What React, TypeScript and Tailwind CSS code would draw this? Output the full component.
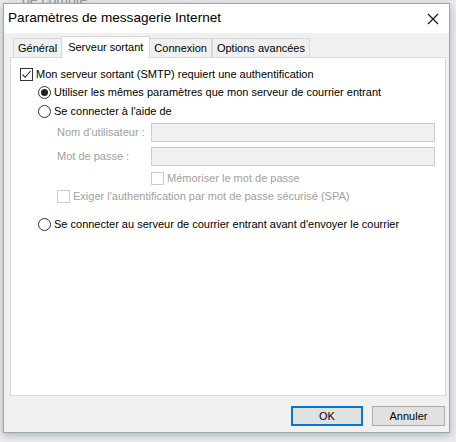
import React from "react";

const font = { fontFamily: '"Liberation Sans", Arial, sans-serif' };

function CheckBox({ checked, disabled }: { checked?: boolean; disabled?: boolean }) {
  return (
    <span
      className={`w-[13px] h-[13px] border flex items-center justify-center shrink-0 bg-white ${
        disabled ? "border-[#cccccc]" : "border-[#333333]"
      }`}
    >
      {checked && (
        <svg width="11" height="11" viewBox="0 0 11 11">
          <path d="M1.5 5.5 L4.2 8.3 L9.5 2" stroke="#222" strokeWidth="1.1" fill="none" />
        </svg>
      )}
    </span>
  );
}

function Radio({ checked }: { checked?: boolean }) {
  return (
    <span className="w-[13px] h-[13px] rounded-full border border-[#333333] bg-white flex items-center justify-center shrink-0">
      {checked && <span className="w-[7px] h-[7px] rounded-full bg-[#222]" />}
    </span>
  );
}

export default function App() {
  const tabs = ["Général", "Serveur sortant", "Connexion", "Options avancées"];

  return (
    <div className="w-[456px] h-[442px] bg-[#e9ebee] relative overflow-hidden" style={font}>
      <div className="absolute left-0 top-[-7px] text-[14px] leading-[14px] text-[#9a9a9a] pl-[22px]">de compte</div>
      <div className="absolute left-[3px] top-[3px] w-[447px] h-[430px] border border-[#9aa5b1] bg-[#f0f0f0] flex flex-col shadow-[0_2px_8px_rgba(0,0,0,0.25)]">
        {/* title bar */}
        <div className="h-[29px] bg-white flex items-center justify-between pl-[4px] pr-[6px]">
          <span className="text-[13.6px] text-black">Paramètres de messagerie Internet</span>
          <svg width="12" height="12" viewBox="0 0 12 12" className="mr-[4px]">
            <path d="M1 1 L11 11 M11 1 L1 11" stroke="#111" strokeWidth="1.1" />
          </svg>
        </div>

        {/* body */}
        <div className="flex-1 flex flex-col pl-[6px] pr-[3px] pt-[3px]">
          <div className="flex items-end h-[21px] pl-[3px] text-[11px] text-black">
            {tabs.map((t, i) =>
              i === 1 ? (
                <div
                  key={t}
                  className="h-[22px] px-[6px] bg-white border border-b-0 border-[#d9d9d9] flex items-center -mb-[1px] relative z-10 -mx-[1px]"
                >
                  {t}
                </div>
              ) : (
                <div
                  key={t}
                  className="h-[19px] px-[4px] bg-[#f0f0f0] border border-b-0 border-[#d9d9d9] flex items-center"
                >
                  {t}
                </div>
              )
            )}
          </div>

          <div className="h-[339px] bg-white border border-[#d9d9d9] text-[11px] text-black pl-[9px] pr-[10px] pt-[8px] flex flex-col">
            <label className="flex items-center gap-[3px] h-[16px]">
              <CheckBox checked />
              <span>Mon serveur sortant (SMTP) requiert une authentification</span>
            </label>

            <div className="pl-[18px] flex flex-col">
              <label className="flex items-center gap-[3px] h-[16px] mt-[2px]">
                <Radio checked />
                <span>Utiliser les mêmes paramètres que mon serveur de courrier entrant</span>
              </label>
              <label className="flex items-center gap-[3px] h-[16px] mt-[3px]">
                <Radio />
                <span>Se connecter à l'aide de</span>
              </label>

              <div className="pl-[19px] text-[#a0a0a0] flex flex-col">
                <div className="flex items-center mt-[4px] h-[19px]">
                  <span className="w-[94px] whitespace-nowrap">Nom d'utilisateur :</span>
                  <span className="flex-1 h-[19px] bg-[#f0f0f0] border border-[#cccccc]" />
                </div>
                <div className="flex items-center mt-[5px] h-[19px]">
                  <span className="w-[94px] whitespace-nowrap">Mot de passe :</span>
                  <span className="flex-1 h-[19px] bg-[#f0f0f0] border border-[#cccccc]" />
                </div>
                <label className="flex items-center gap-[3px] h-[16px] mt-[4px] pl-[94px]">
                  <CheckBox disabled />
                  <span>Mémoriser le mot de passe</span>
                </label>
                <label className="flex items-center gap-[3px] h-[16px] mt-[2px]">
                  <CheckBox disabled />
                  <span>Exiger l'authentification par mot de passe sécurisé (SPA)</span>
                </label>
              </div>

              <label className="flex items-center gap-[3px] h-[16px] mt-[12px]">
                <Radio />
                <span>Se connecter au serveur de courrier entrant avant d'envoyer le courrier</span>
              </label>
            </div>
          </div>

          <div className="flex justify-end gap-[9px] mt-[10px] pr-[1px] text-[11px] text-black">
            <button className="w-[72px] h-[20px] bg-[#e1e1e1] border-2 border-[#0078d7] flex items-center justify-center">
              OK
            </button>
            <button className="w-[73px] h-[20px] bg-[#e1e1e1] border border-[#adadad] flex items-center justify-center">
              Annuler
            </button>
          </div>
        </div>
      </div>
    </div>
  );
}
